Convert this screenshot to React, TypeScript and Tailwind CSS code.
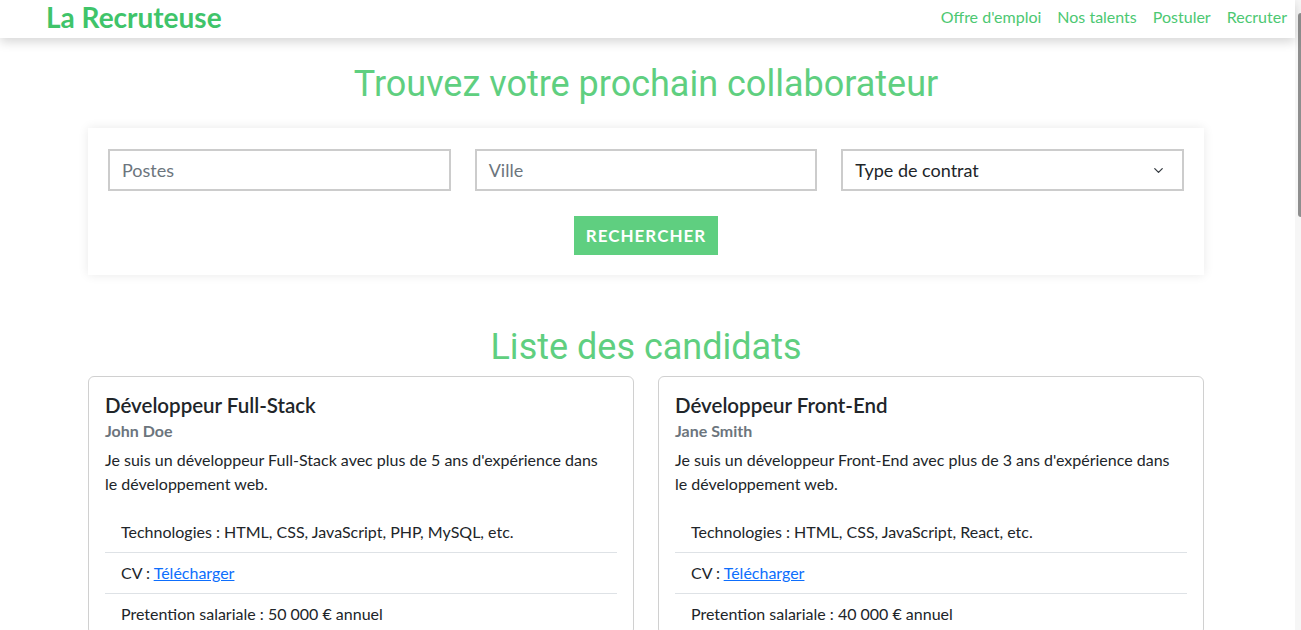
import { ChevronDown } from 'lucide-react';

const candidates = [
  {
    title: 'Développeur Full-Stack',
    name: 'John Doe',
    bio: "Je suis un développeur Full-Stack avec plus de 5 ans d'expérience dans le développement web.",
    tech: 'HTML, CSS, JavaScript, PHP, MySQL, etc.',
    salary: '50 000 € annuel',
  },
  {
    title: 'Développeur Front-End',
    name: 'Jane Smith',
    bio: "Je suis un développeur Front-End avec plus de 3 ans d'expérience dans le développement web.",
    tech: 'HTML, CSS, JavaScript, React, etc.',
    salary: '40 000 € annuel',
  },
];

const body = "font-['Lato','Liberation_Sans',sans-serif]";
const heading = "font-['Roboto','Liberation_Sans',sans-serif]";

function Navbar() {
  return (
    <nav className="relative z-10 h-[38px] bg-white shadow-[0_4px_10px_rgba(0,0,0,0.16)] flex items-center justify-between pl-[46px] pb-[5px]">
      <a className={`${body} text-[28px] font-bold text-[#3fc46a] leading-none`}>La Recruteuse</a>
      <ul className={`${body} flex items-center text-[16px] text-[#4cc872]`}>
        {["Offre d'emploi", 'Nos talents', 'Postuler', 'Recruter'].map((l) => (
          <li key={l} className="px-2">{l}</li>
        ))}
      </ul>
    </nav>
  );
}

function SearchBox() {
  return (
    <div className="bg-white shadow-[0_0_10px_rgba(0,0,0,0.09)] px-5 pt-[21px] pb-[20px]">
      <div className="grid grid-cols-3 gap-6">
        <div className="h-[42px] border-2 border-[#cccccc] flex items-center px-3 text-[18px] text-[#6c757d]">Postes</div>
        <div className="h-[42px] border-2 border-[#cccccc] flex items-center px-3 text-[18px] text-[#6c757d]">Ville</div>
        <div className="h-[42px] border-2 border-[#cccccc] flex items-center justify-between pl-3 pr-4 text-[18px] text-[#212529]">
          <span>Type de contrat</span>
          <ChevronDown size={15} strokeWidth={2} className="text-[#343a40]" />
        </div>
      </div>
      <div className="flex justify-center mt-[25px]">
        <button className="h-[39px] px-3 bg-[#5fcf80] text-white font-bold text-[17px] tracking-[1px]">RECHERCHER</button>
      </div>
    </div>
  );
}

function CandidateCard({ c }: { c: (typeof candidates)[number] }) {
  return (
    <div className="border border-[#d0d0d0] rounded-md bg-white px-4 pt-4">
      <h5 className="text-[20.5px] leading-[24px] font-semibold text-[#212529] mb-2">{c.title}</h5>
      <h6 className="text-[16px] leading-[19px] font-bold text-[#6c757d] -mt-1 mb-2">{c.name}</h6>
      <p className="max-w-[502px] text-[16px] leading-6 text-[#212529] mb-4">{c.bio}</p>
      <ul className="text-[16px] leading-6 text-[#212529]">
        <li className="px-4 py-2 border-b border-[#dee2e6]">Technologies : {c.tech}</li>
        <li className="px-4 py-2 border-b border-[#dee2e6]">
          CV : <a className="text-[#0d6efd] underline">Télécharger</a>
        </li>
        <li className="px-4 py-2">Pretention salariale : {c.salary}</li>
      </ul>
    </div>
  );
}

export default function App() {
  return (
    <div className={`${body} h-[630px] w-[1301px] flex overflow-hidden bg-white`}>
      <div className="w-[1295px] shrink-0">
        <Navbar />
        <main className="w-[1140px] ml-[76px] px-3">
          <h1 className={`${heading} text-center text-[36px] leading-[48px] text-[#5fcf80] mt-[22px] mb-5`}>
            Trouvez votre prochain collaborateur
          </h1>
          <SearchBox />
          <h2 className={`${heading} text-center text-[36px] leading-[48px] text-[#5fcf80] mt-[48px] mb-[5px]`}>
            Liste des candidats
          </h2>
          <div className="grid grid-cols-2 gap-6">
            {candidates.map((c) => (
              <CandidateCard key={c.name} c={c} />
            ))}
          </div>
        </main>
      </div>
      <div className="flex-1 bg-[#f6f6f6] relative">
        <div className="absolute right-0 top-[13px] h-[204px] w-[3px] rounded-l-sm bg-[#8e8e8e]" />
      </div>
    </div>
  );
}
